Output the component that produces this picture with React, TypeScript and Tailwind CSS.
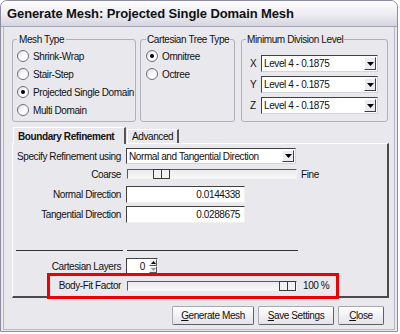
import React from 'react';

const face = 'bg-[#e9e8ec]';

const Radio: React.FC<{ label: string; checked?: boolean }> = ({ label, checked }) => (
  <div className="flex items-center h-[18px]">
    <span className="w-[12px] h-[12px] rounded-full border border-[#6f6f7c] bg-gradient-to-br from-[#d6d6dc] via-white to-white flex items-center justify-center shrink-0">
      {checked && <span className="w-[4px] h-[4px] rounded-full bg-black" />}
    </span>
    <span className="ml-[4px] whitespace-nowrap">{label}</span>
  </div>
);

const Combo: React.FC<{ value: string; className?: string }> = ({ value, className = '' }) => (
  <div className={`flex items-stretch bg-white border border-t-[#404040] border-l-[#404040] border-r-[#d4d4d8] border-b-[#d4d4d8] ${className}`}>
    <span className="flex-1 pl-[2px] flex items-center whitespace-nowrap overflow-hidden">{value}</span>
    <span className="w-[12px] m-[1px] bg-[#ecebef] border border-t-white border-l-white border-r-[#404040] border-b-[#404040] flex items-center justify-center">
      <svg width="7" height="4" viewBox="0 0 7 4"><path d="M0 0h7L3.5 4z" fill="#000" /></svg>
    </span>
  </div>
);

const Slider: React.FC<{ pos: number }> = ({ pos }) => (
  <div className="relative w-[170px] h-[10px] bg-gradient-to-b from-[#ececee] to-[#f8f8f9] border border-t-[#5a5a5a] border-l-[#5a5a5a] border-r-[#f4f4f4] border-b-[#f4f4f4]">
    <div className="absolute top-[-1px] h-[10px] w-[17px] flex border border-[#3c3c3c] bg-[#f2f2f4]" style={{ left: pos }}>
      <span className="flex-1 border-r border-[#3c3c3c]" />
      <span className="flex-1" />
    </div>
  </div>
);

const Field: React.FC<{ value: string }> = ({ value }) => (
  <div className="w-[119px] h-[17px] bg-white border border-t-[#404040] border-l-[#404040] border-r-[#f0f0f0] border-b-[#f0f0f0] flex items-center justify-end pr-[4px]">
    {value}
  </div>
);

const Label: React.FC<{ children: React.ReactNode; left?: boolean }> = ({ children, left }) => (
  <span className={`w-[108px] shrink-0 whitespace-nowrap ${left ? 'text-left pl-[4px]' : 'text-right'}`}>{children}</span>
);

const Button: React.FC<{ w: string; k: string; rest: string }> = ({ w, k, rest }) => (
  <button className={`${w} h-[19px] rounded-[2px] bg-gradient-to-b from-white to-[#e4e3e9] border border-[#606068] border-t-[#a8a8b0] border-l-[#a8a8b0] flex items-center justify-center`}>
    <span className="whitespace-nowrap"><u>{k}</u>{rest}</span>
  </button>
);

export default function App() {
  return (
    <div className="relative w-[400px] h-[334px] bg-white text-[10px] tracking-[-0.4px] leading-[13px] text-[#111] font-['Liberation_Sans',Arial,sans-serif]">
      <div className={`w-[398px] h-[332px] border border-[#8e8da2] rounded-t-[7px] overflow-hidden flex flex-col ${face}`}>
        {/* title bar */}
        <div className="h-[26px] shrink-0 bg-gradient-to-b from-[#fdfdfe] via-[#eeeef3] to-[#d6d5df] border-b border-[#a5a4b6] flex items-center pl-[6px] font-bold text-[13px] tracking-[-0.1px] text-[#101010] whitespace-nowrap">
          Generate Mesh: Projected Single Domain Mesh
        </div>
        <div className="flex-1 mx-[2px] mb-[1px] border-x border-b border-[#b7b6c6] pl-[8px] pr-[5px] pt-[6px] flex flex-col">
          {/* group boxes */}
          <div className="flex h-[89px]">
            <fieldset className="w-[124px] border border-[#b0afbb] rounded-[3px] pl-[4px]">
              <legend className="px-[2px] whitespace-nowrap">Mesh Type</legend>
              <div className="pt-[1px]">
                <Radio label="Shrink-Wrap" />
                <Radio label="Stair-Step" />
                <Radio label="Projected Single Domain" checked />
                <Radio label="Multi Domain" />
              </div>
            </fieldset>
            <fieldset className="ml-[4px] w-[95px] border border-[#b0afbb] rounded-[3px] pl-[5px]">
              <legend className="px-[1px] whitespace-nowrap">Cartesian Tree Type</legend>
              <div className="pt-[1px]">
                <Radio label="Omnitree" checked />
                <Radio label="Octree" />
              </div>
            </fieldset>
            <fieldset className="ml-[6px] w-[147px] border border-[#b0afbb] rounded-[3px] pl-[4px]">
              <legend className="px-[1px] whitespace-nowrap">Minimum Division Level</legend>
              <div className="pt-[9px] flex flex-col gap-[4px]">
                {['X', 'Y', 'Z'].map((a) => (
                  <div key={a} className="flex items-center">
                    <span className="w-[15px] pl-[4px]">{a}</span>
                    <Combo value="Level 4 - 0.1875" className="w-[117px] h-[17px]" />
                  </div>
                ))}
              </div>
            </fieldset>
          </div>

          {/* tabs */}
          <div className="mt-[5px] flex items-end h-[16px]">
            <div className={`h-[17px] w-[113px] ml-[1px] border-t border-l border-white border-r-2 border-r-[#555] ${face} relative z-10 -mb-[1px] flex items-center pl-[4px] font-bold whitespace-nowrap`}>
              Boundary Refinement
            </div>
            <div className="h-[14px] w-[52px] ml-[1px] border-t border-l border-white border-r-2 border-r-[#555] flex items-center pl-[4px] whitespace-nowrap">
              Advanced
            </div>
          </div>
          <div className="w-[377px] h-[155px] border-t border-l border-white border-r-2 border-b-2 border-r-[#4a4a4a] border-b-[#4a4a4a] flex flex-col">
            <div className="mt-[4px] h-[16px] flex items-center">
              <Label left>Specify Refinement using</Label>
              <Combo value="Normal and Tangential Direction" className="ml-[5px] w-[170px] h-[16px]" />
            </div>
            <div className="h-[20px] flex items-center">
              <Label>Coarse</Label>
              <div className="ml-[6px]"><Slider pos={25} /></div>
              <span className="ml-[4px]">Fine</span>
            </div>
            <div className="mt-[2px] h-[17px] flex items-center">
              <Label>Normal Direction</Label>
              <div className="ml-[5px]"><Field value="0.0144338" /></div>
            </div>
            <div className="mt-[3px] h-[17px] flex items-center">
              <Label>Tangential Direction</Label>
              <div className="ml-[5px]"><Field value="0.0288675" /></div>
            </div>
            <div className="mt-[27px] flex">
              <span className="ml-[3px] w-[107px] border-t border-[#333]" />
              <span className="ml-[4px] w-[171px] border-t border-[#333]" />
            </div>
            <div className="mt-[7px] h-[16px] flex items-center">
              <Label>Cartesian Layers</Label>
              <div className="ml-[5px] h-[16px] flex items-stretch bg-white border border-t-[#404040] border-l-[#404040] border-r-[#f0f0f0] border-b-[#f0f0f0]">
                <span className="w-[22px] text-right pr-[4px] flex items-center justify-end">0</span>
                <span className="w-[8px] flex flex-col bg-[#ecebef]">
                  <span className="flex-1 flex items-center justify-center border border-t-white border-l-white border-r-[#555] border-b-[#555]">
                    <svg width="5" height="3" viewBox="0 0 5 3"><path d="M2.5 0L5 3H0z" fill="#000" /></svg>
                  </span>
                  <span className="flex-1 flex items-center justify-center border border-t-white border-l-white border-r-[#555] border-b-[#555]">
                    <svg width="5" height="3" viewBox="0 0 5 3"><path d="M0 0h5L2.5 3z" fill="#999" /></svg>
                  </span>
                </span>
              </div>
            </div>
            <div className="mt-[1px] h-[21px] flex items-center">
              <Label>Body-Fit Factor</Label>
              <div className="ml-[6px]"><Slider pos={151} /></div>
              <span className="ml-[6px]">100 %</span>
            </div>
          </div>

          {/* buttons */}
          <div className="mt-[8px] flex justify-end gap-[4px] pr-[5px]">
            <Button w="w-[82px]" k="G" rest="enerate Mesh" />
            <Button w="w-[76px]" k="S" rest="ave Settings" />
            <Button w="w-[46px]" k="C" rest="lose" />
          </div>
        </div>
      </div>

      {/* annotation */}
      <div className="absolute left-[47px] top-[273px] w-[292px] h-[26px] border-[3px] border-[#ee0000] pointer-events-none" />
    </div>
  );
}
